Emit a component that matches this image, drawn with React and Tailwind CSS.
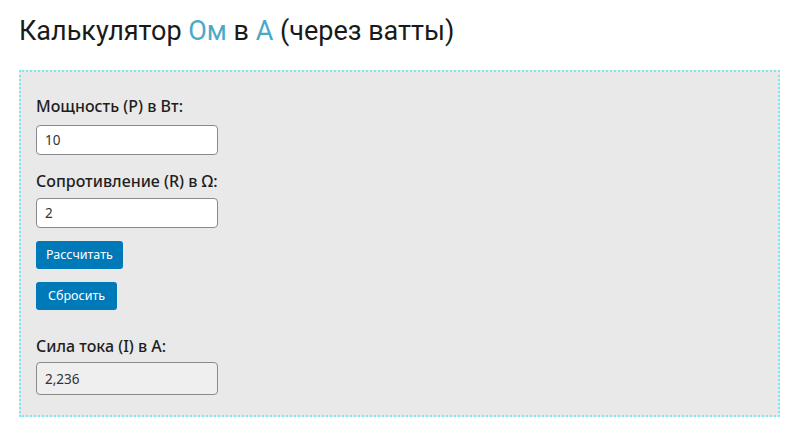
export default function App() {
  const label = "block text-[16px] leading-[24px] font-medium text-[#1f1f1f]";
  const input =
    "block w-[182px] rounded-[4px] border border-[#8a8a8a] px-[8px] text-[13.5px] text-[#333] outline-none";
  const btn =
    "block h-[28px] rounded-[3px] bg-[#0079b9] px-[10px] text-[12.5px] text-white";
  return (
    <div className="min-h-[432px] w-[799px] bg-white" style={{ fontFamily: "'Noto Sans', 'Open Sans', sans-serif" }}>
      <div className="px-[19px] pt-[13px]">
        <h1
          className="text-[27px] leading-[37px] font-normal text-[#1a1a1a]"
          style={{ fontFamily: "Roboto, sans-serif" }}
        >
          Калькулятор <span className="text-[#4aa9c6]">Ом</span> в{" "}
          <span className="text-[#4aa9c6]">А</span> (через ватты)
        </h1>
        <div className="mt-[20px] h-[347px] border-2 border-dotted border-[#80e6f5] bg-[#e9e9e9] px-[15px] pt-[22px]">
          <label className={label}>Мощность (P) в Вт:</label>
          <input className={`${input} mt-[7px] h-[30px] bg-white`} defaultValue="10" />
          <label className={`${label} mt-[14px]`}>Сопротивление (R) в Ω:</label>
          <input className={`${input} mt-[5px] h-[30px] bg-white`} defaultValue="2" />
          <button className={`${btn} mt-[13px]`}>Рассчитать</button>
          <button className={`${btn} mt-[13px] px-[12px]`}>Сбросить</button>
          <label className={`${label} mt-[24px]`}>Сила тока (I) в А:</label>
          <input
            className={`${input} mt-[4px] h-[33px] bg-[#efefef]`}
            readOnly
            defaultValue="2,236"
          />
        </div>
      </div>
    </div>
  );
}
